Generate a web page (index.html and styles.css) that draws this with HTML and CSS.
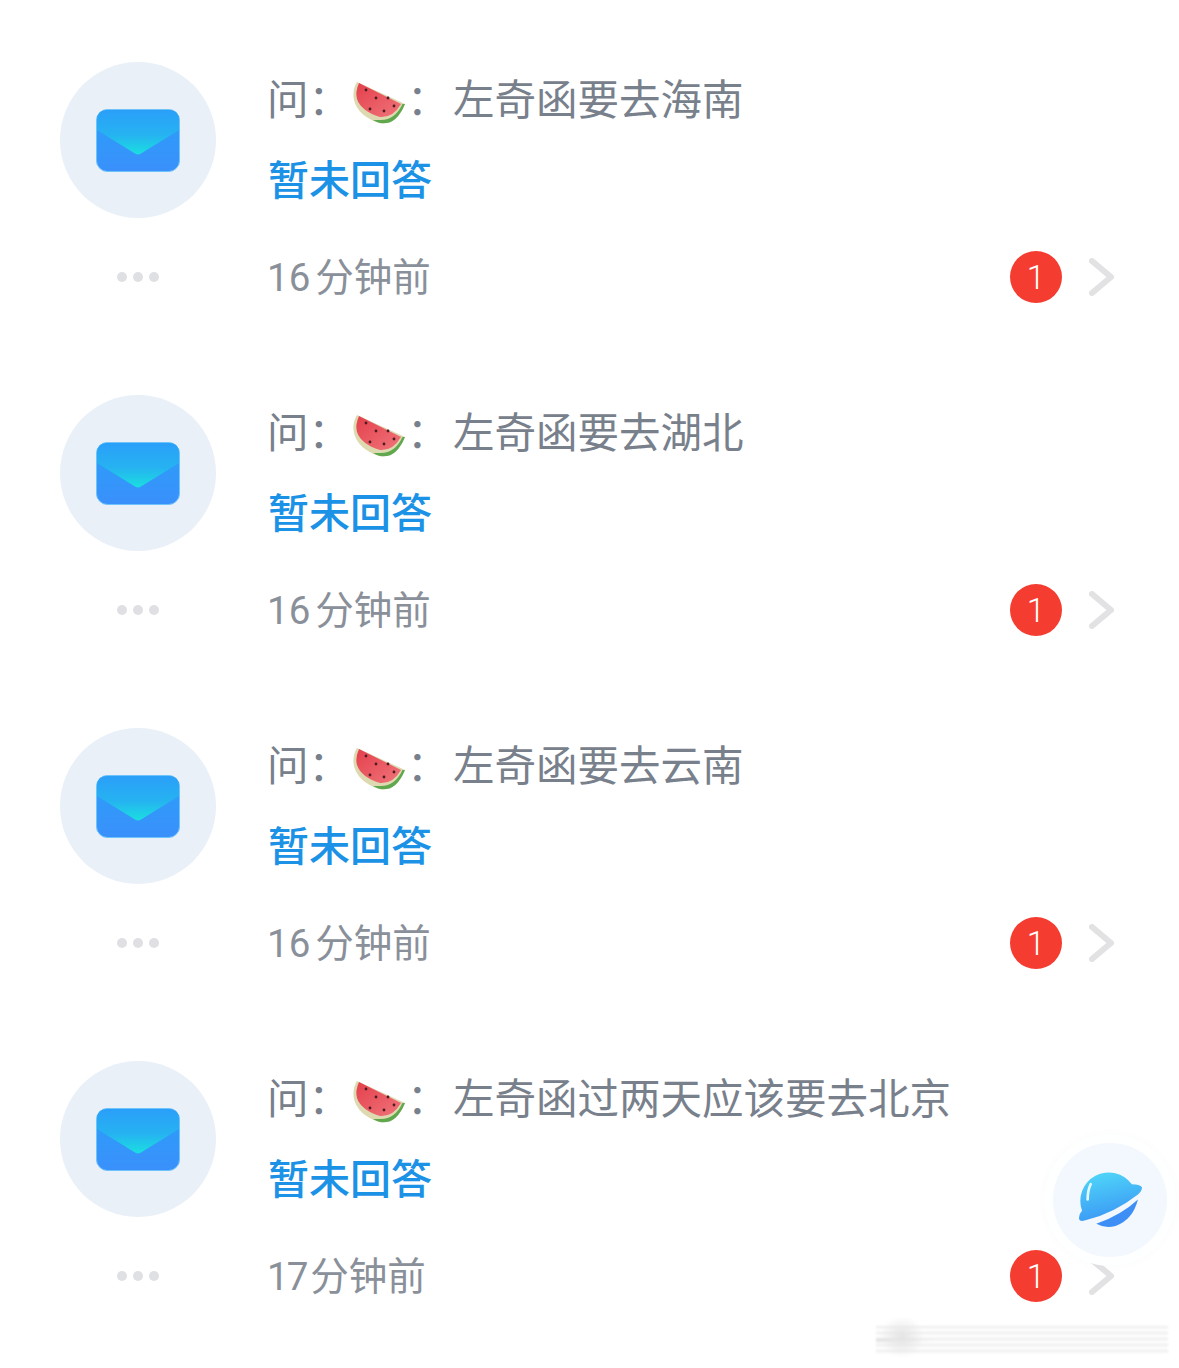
FILE: index.html
```html
<!DOCTYPE html>
<html>
<head>
  <meta charset="utf-8">
  <link rel="stylesheet" href="styles.css">
</head>
<body>
  <svg class="defs" width="0" height="0">
    <defs>
      <linearGradient id="mail-body" x1="0" y1="0" x2="0" y2="1">
        <stop offset="0" stop-color="#2a9ff9"/>
        <stop offset="1" stop-color="#3a90fb"/>
      </linearGradient>
      <linearGradient id="mail-flap" x1="0" y1="0" x2="0" y2="1">
        <stop offset="0" stop-color="#2a9ff9"/>
        <stop offset="0.55" stop-color="#26b2f1"/>
        <stop offset="1" stop-color="#1adfe0"/>
      </linearGradient>
      <linearGradient id="melon-flesh" x1="0" y1="0" x2="1" y2="1">
        <stop offset="0" stop-color="#e4404c"/>
        <stop offset="1" stop-color="#f0747a"/>
      </linearGradient>
      <linearGradient id="planet" x1="0.3" y1="0" x2="0.6" y2="1">
        <stop offset="0" stop-color="#4fd6f8"/>
        <stop offset="1" stop-color="#3a94f5"/>
      </linearGradient>
      <symbol id="mail" viewBox="0 0 84 63">
        <rect x="0.5" y="0.5" width="83" height="62" rx="11" fill="url(#mail-body)" stroke="#6ec3fb" stroke-width="1"/>
        <path d="M1 21 L39 44.5 Q42 46.5 45 44.5 L83 21 L83 11 Q83 1 73 1 L11 1 Q1 1 1 11 Z" fill="url(#mail-flap)"/>
      </symbol>
      <symbol id="melon" viewBox="0 0 54 46">
        <path d="M4 2 Q-1 10 1 20 Q5 36 26 43 Q43 46 52 24 Z" fill="#ddd9b0"/>
        <path d="M20 40 Q23 42 27 43 Q43 46 52 24 L49.5 24 Q42 40 28 40 Q24 40 20 40 Z" fill="#5fa84e"/>
        <path d="M6 3 Q2 12 4 19 Q8 31 27 37 Q40 38 48 24 Z" fill="url(#melon-flesh)"/>
        <g fill="#4c1c22">
          <circle cx="13" cy="10" r="1.4"/>
          <circle cx="23" cy="18" r="1.4"/>
          <circle cx="35" cy="18" r="1.4"/>
          <circle cx="17" cy="29" r="1.4"/>
          <circle cx="31" cy="31" r="1.4"/>
          <circle cx="41" cy="26" r="1.4"/>
        </g>
      </symbol>
      <symbol id="chevron" viewBox="0 0 26 38">
        <path d="M3 3 L22 19 L3 35" fill="none" stroke="#e2e2e4" stroke-width="6" stroke-linecap="round" stroke-linejoin="round"/>
      </symbol>
    </defs>
  </svg>

  <div class="list">
    <div class="row">
      <div class="side">
        <div class="avatar"><svg class="mail"><use href="#mail"/></svg></div>
        <div class="dots"><i></i><i></i><i></i></div>
      </div>
      <div class="main">
        <div class="question"><span class="q-label">问：</span><svg class="melon"><use href="#melon"/></svg><span class="q-colon">：</span><span>左奇函要去海南</span></div>
        <div class="answer">暂未回答</div>
        <div class="meta">
          <span class="time"><span class="num">16</span>分钟前</span>
          <span class="badge">1</span>
          <svg class="chevron"><use href="#chevron"/></svg>
        </div>
      </div>
    </div>

    <div class="row">
      <div class="side">
        <div class="avatar"><svg class="mail"><use href="#mail"/></svg></div>
        <div class="dots"><i></i><i></i><i></i></div>
      </div>
      <div class="main">
        <div class="question"><span class="q-label">问：</span><svg class="melon"><use href="#melon"/></svg><span class="q-colon">：</span><span>左奇函要去湖北</span></div>
        <div class="answer">暂未回答</div>
        <div class="meta">
          <span class="time"><span class="num">16</span>分钟前</span>
          <span class="badge">1</span>
          <svg class="chevron"><use href="#chevron"/></svg>
        </div>
      </div>
    </div>

    <div class="row">
      <div class="side">
        <div class="avatar"><svg class="mail"><use href="#mail"/></svg></div>
        <div class="dots"><i></i><i></i><i></i></div>
      </div>
      <div class="main">
        <div class="question"><span class="q-label">问：</span><svg class="melon"><use href="#melon"/></svg><span class="q-colon">：</span><span>左奇函要去云南</span></div>
        <div class="answer">暂未回答</div>
        <div class="meta">
          <span class="time"><span class="num">16</span>分钟前</span>
          <span class="badge">1</span>
          <svg class="chevron"><use href="#chevron"/></svg>
        </div>
      </div>
    </div>

    <div class="row">
      <div class="side">
        <div class="avatar"><svg class="mail"><use href="#mail"/></svg></div>
        <div class="dots"><i></i><i></i><i></i></div>
      </div>
      <div class="main">
        <div class="question"><span class="q-label">问：</span><svg class="melon"><use href="#melon"/></svg><span class="q-colon">：</span><span>左奇函过两天应该要去北京</span></div>
        <div class="answer">暂未回答</div>
        <div class="meta">
          <span class="time"><span class="num narrow">17</span>分钟前</span>
          <span class="badge">1</span>
          <svg class="chevron"><use href="#chevron"/></svg>
        </div>
      </div>
    </div>
  </div>

  <div class="float-btn">
    <svg class="planet" viewBox="0 0 62 56">
      <path d="M3 38 A28 28 0 0 1 52 12 Q60 12 62 15 Q62 19 58 22 Q35 40 8 47 Q0 50 0 45 Q0 41 3 38 Z" fill="url(#planet)"/>
      <path d="M58 27 Q53 47 36 53 Q26 56 17 51 Q42 42 58 27 Z" fill="#3d8ff6"/>
      <path d="M8.5 27 Q8.5 18 11.5 12" fill="none" stroke="#e6f8ff" stroke-width="2.6" stroke-linecap="round"/>
    </svg>
  </div>

  <div class="watermark"></div>
</body>
</html>
```

FILE: styles.css
```css
body {
  margin: 0;
  width: 1179px;
  height: 1368px;
  overflow: hidden;
  position: relative;
  background: #ffffff;
  font-family: "Noto Sans CJK SC", "Noto Sans", sans-serif;
}

.defs {
  position: absolute;
}

.list {
  padding: 62px 64px 0 60px;
}

.row {
  display: flex;
  height: 333px;
}

.side {
  width: 156px;
  margin-right: 52px;
  display: flex;
  flex-direction: column;
  align-items: center;
}

.avatar {
  width: 156px;
  height: 156px;
  border-radius: 50%;
  background: #e9f0f8;
  display: flex;
  align-items: center;
  justify-content: center;
}

.mail {
  width: 84px;
  height: 63px;
}

.dots {
  display: flex;
  gap: 6px;
  margin-top: 54px;
}

.dots i {
  width: 10px;
  height: 10px;
  border-radius: 50%;
  background: #dfe0e3;
}

.main {
  flex: 1;
  min-width: 0;
}

.question {
  display: flex;
  align-items: center;
  height: 60px;
  margin-top: 5px;
  margin-left: -1px;
  font-size: 41.5px;
  color: #78808c;
}

.q-label {
  width: 86px;
}

.melon {
  width: 54px;
  height: 46px;
  margin-top: 12px;
}

.q-colon {
  width: 46px;
}

.answer {
  height: 60px;
  margin-top: 20px;
  line-height: 60px;
  font-size: 41px;
  font-weight: 500;
  color: #1b92e6;
}

.meta {
  display: flex;
  align-items: center;
  height: 60px;
  margin-top: 40px;
}

.time {
  flex: 1;
  margin-left: -1px;
  padding-bottom: 6px;
  font-size: 38.5px;
  color: #8a909a;
}

.num {
  font-family: "Roboto", sans-serif;
  margin-right: 5px;
}

.num.narrow {
  letter-spacing: -2px;
  margin-right: 4px;
}

.badge {
  width: 52px;
  height: 52px;
  border-radius: 50%;
  background: #f43c30;
  color: #ffffff;
  font-family: "Roboto", sans-serif;
  font-weight: 300;
  font-size: 33px;
  display: flex;
  align-items: center;
  justify-content: center;
}

.chevron {
  width: 26px;
  height: 38px;
  margin-left: 27px;
}

.float-btn {
  position: absolute;
  left: 1044px;
  top: 1134px;
  width: 114px;
  height: 114px;
  border: 9px solid rgba(255, 255, 255, 0.9);
  border-radius: 50%;
  background: #f3f7fe;
  box-shadow: 0 0 12px rgba(0, 0, 0, 0.02);
  display: flex;
  align-items: center;
  justify-content: center;
}

.planet {
  width: 63px;
  height: 57px;
}

.watermark {
  position: absolute;
  left: 876px;
  top: 1316px;
  width: 292px;
  height: 42px;
  background:
    radial-gradient(ellipse 22px 21px at 26px 21px, #e4e4e5 0, rgba(228, 228, 229, 0) 100%),
    linear-gradient(90deg, #e4e4e5 0, rgba(255, 255, 255, 0) 60px),
    repeating-linear-gradient(180deg, #eeeeef 0, #eeeeef 2px, #fcfcfc 2px, #fcfcfc 6px);
  background-size: 100% 100%, 100% 4px, 100% 28px;
  background-position: 0 0, 0 22px, 0 10px;
  background-repeat: no-repeat;
  filter: blur(1px);
}
```
